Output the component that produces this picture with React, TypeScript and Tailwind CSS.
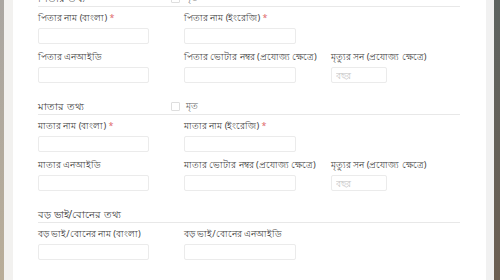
import React from "react";

type Field = { label: string; required?: boolean; placeholder?: string };

type Section = { title: string; deceased?: boolean; rows: Field[][] };

const sections: Section[] = [
  {
    title: "পিতার তথ্য",
    deceased: true,
    rows: [
      [
        { label: "পিতার নাম (বাংলা)", required: true },
        { label: "পিতার নাম (ইংরেজি)", required: true },
      ],
      [
        { label: "পিতার এনআইডি" },
        { label: "পিতার ভোটার নম্বর (প্রযোজ্য ক্ষেত্রে)" },
        { label: "মৃত্যুর সন (প্রযোজ্য ক্ষেত্রে)", placeholder: "বছর" },
      ],
    ],
  },
  {
    title: "মাতার তথ্য",
    deceased: true,
    rows: [
      [
        { label: "মাতার নাম (বাংলা)", required: true },
        { label: "মাতার নাম (ইংরেজি)", required: true },
      ],
      [
        { label: "মাতার এনআইডি" },
        { label: "মাতার ভোটার নম্বর (প্রযোজ্য ক্ষেত্রে)" },
        { label: "মৃত্যুর সন (প্রযোজ্য ক্ষেত্রে)", placeholder: "বছর" },
      ],
    ],
  },
  {
    title: "বড় ভাই/বোনের তথ্য",
    rows: [
      [
        { label: "বড় ভাই/বোনের নাম (বাংলা)" },
        { label: "বড় ভাই/বোনের এনআইডি" },
      ],
    ],
  },
];

const FormField: React.FC<{ field: Field }> = ({ field }) => (
  <div className="flex flex-col">
    <label className="text-[9px] leading-[14px] text-[#444] whitespace-nowrap">
      {field.label}
      {field.required && <span className="text-[#e06c6c]"> *</span>}
    </label>
    <input
      placeholder={field.placeholder}
      className="mt-[3px] h-[16px] w-full rounded-[2px] border border-[#ebebeb] bg-white px-[4px] text-[9px] text-[#333] outline-none placeholder:text-[#c4c4c4]"
    />
  </div>
);

export default function App() {
  return (
    <div className="flex h-[280px] w-[500px] overflow-hidden font-['Noto_Sans',sans-serif]">
      <div className="w-[4px] bg-gradient-to-b from-[#aaa6a1] to-[#b9ad98]" />
      <div className="w-[9px] bg-[#f2f1ef]" />
      <div className="flex-1 bg-white pl-[25px] pr-[26px]">
        <div className="-mt-[10px]">
          {sections.map((s) => (
            <div key={s.title} className="mb-[15px]">
              <div className="flex h-[17px] items-start border-b border-[#e8e8e8] pb-[1px]">
                <div className="flex h-[16px] items-center">
                  <h3 className="w-[133px] text-[10px] leading-[16px] text-[#444]">{s.title}</h3>
                  {s.deceased && (
                    <label className="flex items-center gap-[6px] text-[9px] text-[#666]">
                      <input
                        type="checkbox"
                        className="h-[9px] w-[9px] appearance-none rounded-[1px] border border-[#dedede] bg-white"
                      />
                      মৃত
                    </label>
                  )}
                </div>
              </div>
              <div className="flex flex-col gap-[6px] pt-[4px]">
                {s.rows.map((row, i) => (
                  <div key={i} className="grid grid-cols-[111px_112px_56px] gap-x-[35px]">
                    {row.map((f) => (
                      <FormField key={f.label} field={f} />
                    ))}
                  </div>
                ))}
              </div>
            </div>
          ))}
        </div>
      </div>
      <div className="w-[8px] bg-[#f1f1f1]" />
      <div className="w-[6px] bg-gradient-to-b from-[#5d6360] to-[#6c5f52]" />
    </div>
  );
}
